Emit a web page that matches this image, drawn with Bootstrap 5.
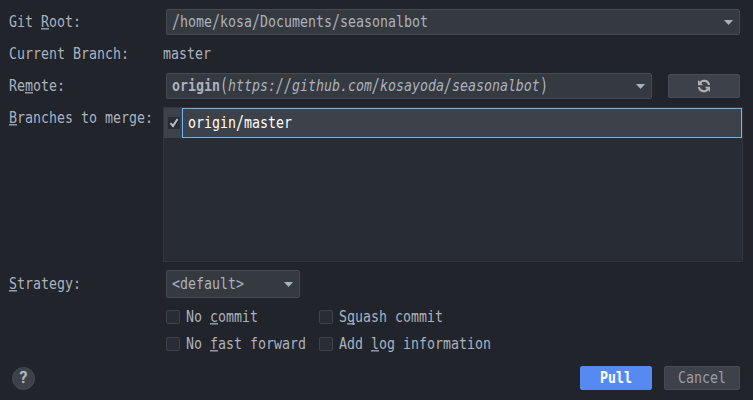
<!DOCTYPE html>
<html lang="en">
<head>
<meta charset="utf-8">
<title>Pull Changes</title>
<link href="https://cdn.jsdelivr.net/npm/bootstrap@5.3.0/dist/css/bootstrap.min.css" rel="stylesheet">
<style>
body{background:#21242b;color:#abb2bf;font-family:"DejaVu Sans Mono","Liberation Mono",monospace;font-size:13.29px;line-height:20px;overflow:hidden}
.dialog{width:753px;height:400px;padding:9px 10px 10px 9px}
/* narrow, tall monospace lettering */
.txt{display:inline-block;white-space:pre;transform:scaleY(1.24);line-height:20px}
.key{text-decoration:underline;text-decoration-thickness:1px;text-underline-offset:1px;text-decoration-skip-ink:none}
.high{display:inline-block;transform:scaleY(1.2)}
.lbl{width:154px;flex:none}
.combo{height:26px;background:#353940;border:1px solid #464a53;border-radius:2px;padding:0 6px 0 5px}
.combo.tall{height:28px;width:134px}
.push{height:24px;padding:0;border:1px solid #464b55;border-radius:2px;background:#3d4149;color:#9a9ea6;font-size:13.29px;line-height:20px;display:flex;align-items:center;justify-content:center}
.push.primary{background:#568af2;border-color:#568af2;color:#fff;font-weight:700}
.branches{width:580px;height:155px;background:#282c34;border:1px solid #32363e}
.pick{width:18px;background:#3d4149;padding-left:2px}
.tick{width:12px;height:12px;background:#282c34}
.cell{height:30px;border:1px solid #6cb4f5;background:#3d4149;color:#fff;padding-left:5px}
.box{width:14px;height:14px;border:1px solid #3c414b;border-radius:2px;background:#282c34;flex:none}
.opt{width:153px;height:14px;gap:6px}
.help{width:23px;height:23px;background:#3d4149;border:1px solid #464b55;font:500 16px/20px Roboto,sans-serif;color:#b4b8bf;-webkit-text-stroke:.4px #b4b8bf}
svg{flex:none;display:block}
.gitroot{height:26px;padding-right:3px}
.gitroot .combo,.remote .combo,.strategy .combo{margin-left:3px}
.current{height:20px;margin-top:9px}
.remote{height:26px;margin-top:9px;padding-right:3px}
.remote .push{width:72px;margin-left:16px}
.merge{margin-top:8px}
.merge .lbl{padding-top:1px}
.strategy{margin-top:8px}
.options{margin:12px 0 0 157px}
.second{margin-top:13px}
footer{margin:15px 3px 0 3px}
footer .primary{width:72px}
footer .cancel{width:76px;margin-left:12px}
</style>
</head>
<body>
<main class="dialog d-flex flex-column">
  <div class="gitroot d-flex align-items-center">
    <div class="lbl"><span class="txt">Git <span class="key">R</span>oot:</span></div>
    <div class="combo d-flex align-items-center justify-content-between flex-grow-1"><span class="txt"><span class="high">/</span>home<span class="high">/</span>kosa<span class="high">/</span>Documents<span class="high">/</span>seasonalbot</span><svg width="9" height="5"><path d="M0 0h9L4.5 5z" fill="#abb2bf"/></svg></div>
  </div>
  <div class="d-flex align-items-center current">
    <div class="lbl"><span class="txt">Current Branch:</span></div><span class="txt">master</span>
  </div>
  <div class="d-flex align-items-center remote">
    <div class="lbl"><span class="txt">Re<span class="key">m</span>ote:</span></div>
    <div class="combo d-flex align-items-center justify-content-between flex-grow-1"><span class="txt"><b>origin</b><span class="high">(</span><i>https:<span class="high">//</span>github.com<span class="high">/</span>kosayoda<span class="high">/</span>seasonalbot</i><span class="high">)</span></span><svg width="9" height="5"><path d="M0 0h9L4.5 5z" fill="#abb2bf"/></svg></div>
    <button class="btn push" type="button" aria-label="Refresh"><svg width="14" height="14" viewBox="0 0 14 14" fill="none" stroke="#afb1b3" stroke-width="2.1"><path d="M3 4.300A4.800 4.800 0 0 1 12 6M11 9.700A4.800 4.800 0 0 1 2 8"/><path d="M1 1V6.200h5.200zM13 13V7.800H7.800z" fill="#afb1b3" stroke="none"/></svg></button>
  </div>
  <div class="d-flex merge">
    <div class="lbl"><span class="txt"><span class="key">B</span>ranches to merge:</span></div>
    <div class="branches"><div class="d-flex">
      <div class="pick d-flex align-items-center justify-content-center"><svg class="tick" viewBox="0 0 12 12"><path d="M2.500 6.200 5 9l4.500-7" fill="none" stroke="#b5bac4" stroke-width="2"/></svg></div>
      <div class="cell d-flex align-items-center flex-grow-1"><span class="txt">origin<span class="high">/</span>master</span></div>
    </div></div>
  </div>
  <div class="d-flex align-items-center strategy">
    <div class="lbl"><span class="txt"><span class="key">S</span>trategy:</span></div>
    <div class="combo tall d-flex align-items-center justify-content-between"><span class="txt">&lt;default&gt;</span><svg width="9" height="5"><path d="M0 0h9L4.5 5z" fill="#abb2bf"/></svg></div>
  </div>
  <div class="options">
    <div class="d-flex"><div class="opt d-flex align-items-center"><span class="box"></span><span class="txt">No <span class="key">c</span>ommit</span></div><div class="opt d-flex align-items-center"><span class="box"></span><span class="txt">S<span class="key">q</span>uash commit</span></div></div>
    <div class="d-flex second"><div class="opt d-flex align-items-center"><span class="box"></span><span class="txt">No <span class="key">f</span>ast forward</span></div><div class="opt d-flex align-items-center"><span class="box"></span><span class="txt">Add <span class="key">l</span>og information</span></div></div>
  </div>
  <footer class="d-flex align-items-center">
    <div class="help rounded-circle d-flex align-items-center justify-content-center me-auto">?</div>
    <button class="btn push primary" type="button"><span class="txt">Pull</span></button>
    <button class="btn push cancel" type="button"><span class="txt">Cancel</span></button>
  </footer>
</main>
<script src="https://cdn.jsdelivr.net/npm/bootstrap@5.3.0/dist/js/bootstrap.bundle.min.js"></script>
</body>
</html>
